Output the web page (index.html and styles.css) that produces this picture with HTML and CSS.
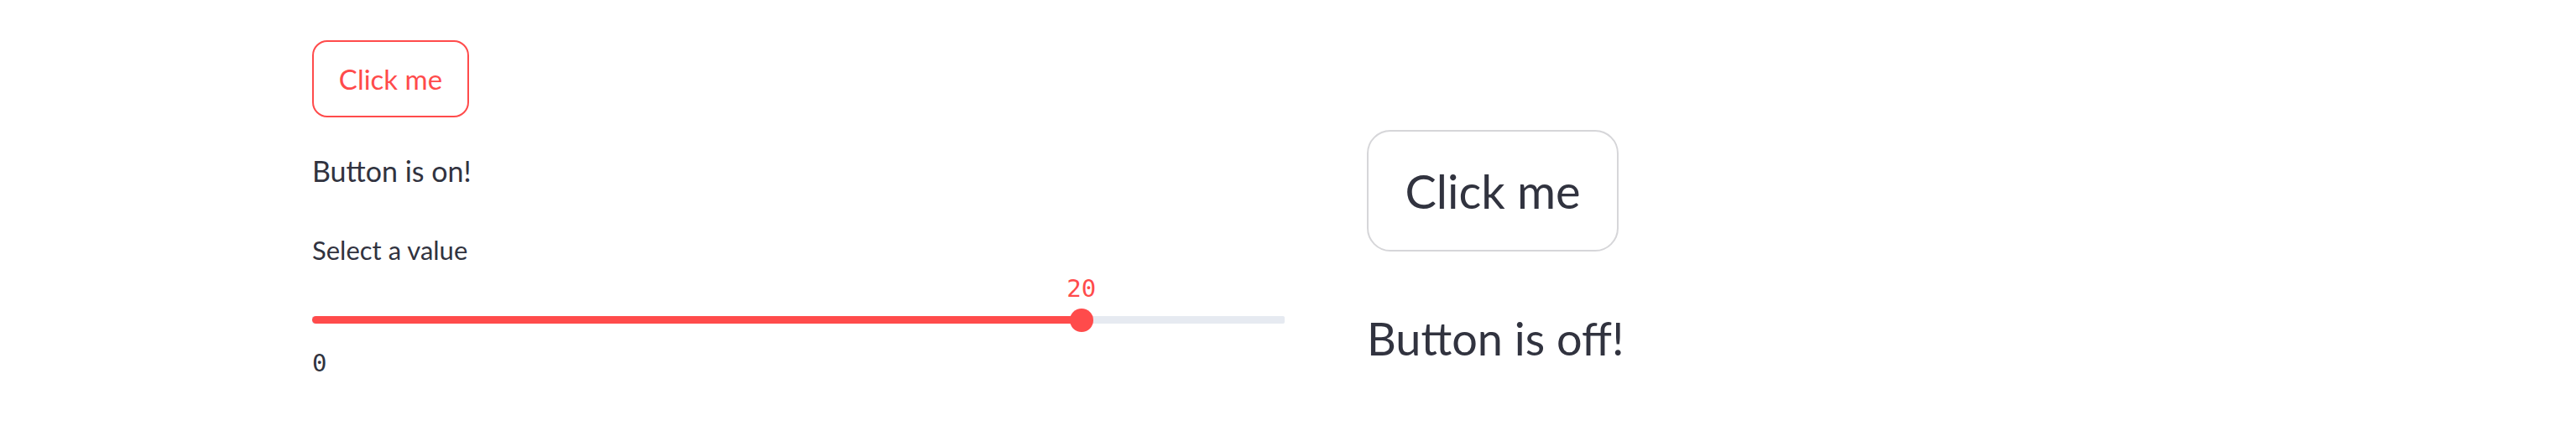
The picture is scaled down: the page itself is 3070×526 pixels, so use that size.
FILE: index.html
```html
<!DOCTYPE html>
<html>
<head>
<meta charset="utf-8">
<link rel="stylesheet" href="styles.css">
</head>
<body>
<div class="page">
  <div class="col-left">
    <button class="btn btn-active">Click me</button>
    <p class="status">Button is on!</p>
    <div class="slider">
      <div class="slider-label">Select a value</div>
      <div class="slider-body">
        <div class="track">
          <div class="fill" style="width: 79.1%"></div>
          <div class="thumb" style="left: 79.1%">
            <span class="thumb-value">20</span>
          </div>
        </div>
      </div>
      <div class="ticks"><span>0</span></div>
    </div>
  </div>
  <div class="col-right">
    <button class="btn btn-big">Click me</button>
    <p class="status-big">Button is off!</p>
  </div>
</div>
</body>
</html>
```

FILE: styles.css
```css
html, body {
  margin: 0;
  padding: 0;
  background: #ffffff;
}
body {
  font-family: Lato, "Noto Sans", "Liberation Sans", sans-serif;
  color: #31333f;
}
.page {
  display: flex;
  align-items: flex-start;
  padding: 48px 0 0 372px;
  gap: 98px;
}
.col-left {
  width: 1159px;
  display: flex;
  flex-direction: column;
  align-items: flex-start;
}
.btn {
  font-family: inherit;
  background: #ffffff;
  box-sizing: border-box;
  display: flex;
  align-items: center;
  justify-content: center;
  padding: 0;
  cursor: pointer;
}
.btn-active {
  width: 187px;
  height: 92px;
  border: 2px solid #ff4b4b;
  border-radius: 18px;
  color: #ff4b4b;
  font-size: 33px;
}
.status {
  margin: 36px 0 0 0;
  font-size: 34px;
  line-height: 56px;
}
.slider {
  width: 100%;
  margin-top: 46px;
}
.slider-label {
  font-size: 31px;
  line-height: 40px;
}
.slider-body {
  padding: 59px 0 27px 0;
}
.track {
  position: relative;
  width: 100%;
  height: 9px;
  background: #e6eaf1;
  border-radius: 2px;
}
.fill {
  height: 100%;
  background: #ff4b4b;
  border-radius: 5px 0 0 5px;
}
.thumb {
  position: absolute;
  top: 50%;
  width: 28px;
  height: 28px;
  margin: -14px 0 0 -14px;
  border-radius: 50%;
  background: #ff4b4b;
}
.thumb-value {
  position: absolute;
  bottom: 37px;
  left: 50%;
  transform: translateX(-50%);
  font-family: "DejaVu Sans Mono", "Liberation Mono", monospace;
  font-size: 29px;
  line-height: 1;
  color: #ff4b4b;
}
.ticks {
  font-family: "DejaVu Sans Mono", "Liberation Mono", monospace;
  font-size: 29px;
  line-height: 40px;
  color: #31333f;
}
.col-right {
  margin-top: 107px;
  display: flex;
  flex-direction: column;
  align-items: flex-start;
}
.btn-big {
  width: 300px;
  height: 145px;
  border: 2px solid #d6d6d9;
  border-radius: 28px;
  color: #31333f;
  font-size: 56px;
}
.status-big {
  margin: 64px 0 0 0;
  font-size: 54px;
  line-height: 80px;
}
```
